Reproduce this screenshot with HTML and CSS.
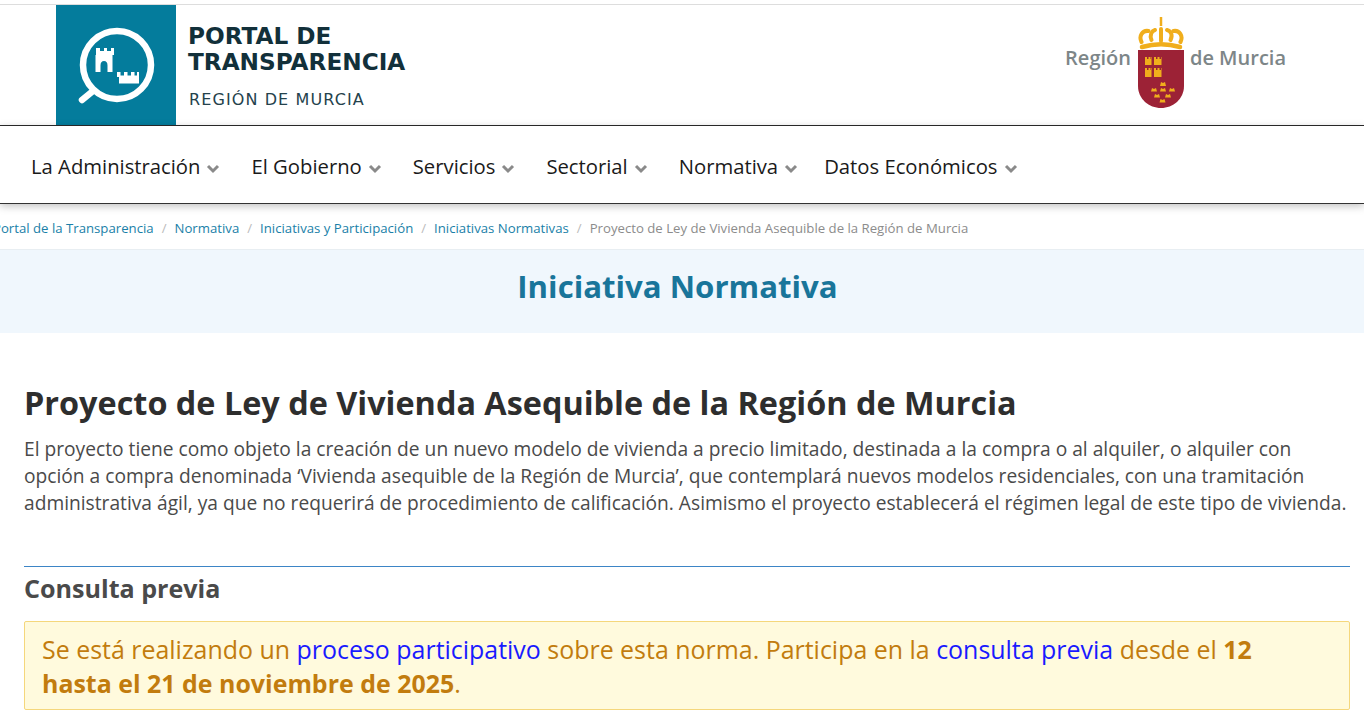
FILE: index.html
```html
<!DOCTYPE html>
<html lang="es">
<head>
<meta charset="utf-8">
<title>Iniciativa Normativa</title>
<link rel="stylesheet" href="styles.css">
</head>
<body>
<header class="top">
  <a class="brand">
    <span class="brand-mark">
      <svg width="120" height="120" viewBox="0 0 120 120">
        <circle cx="61" cy="60" r="34" fill="none" stroke="#fff" stroke-width="6.500"/>
        <path d="M37 86 L26 95" stroke="#fff" stroke-width="6.500" stroke-linecap="round"/>
        <path fill="#fff" fill-rule="evenodd" d="M40 43h4v3h4v-3h3v3h4v-3h3v7h-1.500v17h-5v-6.500a3.500 4.500 0 0 0-7 0V67h-5V50H40z"/>
        <path fill="#fff" d="M61 67h3.500v3.500H68V67h3.500v3.500H75V67h3.500v3.500H81V67h2v11.500H63V72h-2z"/>
      </svg>
    </span>
    <span class="brand-text">
      <span class="brand-title">PORTAL DE<br>TRANSPARENCIA</span>
      <span class="brand-sub">REGIÓN DE MURCIA</span>
    </span>
  </a>
  <div class="carm">
    <span class="carm-word">Región</span>
    <svg class="carm-shield" width="48" height="92" viewBox="0 0 48 92">
      <g fill="none" stroke="#f0ae1c" stroke-linecap="round" stroke-width="4">
        <path d="M4.500 26c-3-6 1-12 7-11"/>
        <path d="M14.500 24c-2-5 0-9 3.500-10"/>
        <path d="M24 25V13"/>
        <path d="M30 14c4 1 6 5 3.500 10"/>
        <path d="M36.500 15c6-1 10 5 7 11"/>
        <path d="M5 31c12-3.500 26-3.500 38 0" stroke-width="4.500"/>
      </g>
      <path d="M24 1v9" stroke="#f0ae1c" stroke-width="2.500"/>
      <path fill="#9c2236" d="M1 34h46v36c0 13-11 22-23 22S1 83 1 70z"/>
      <g fill="#f0ae1c">
        <path d="M8 41h2v2h1.500v-2h2v2H15v-2h-.5v8H8z"/>
        <path d="M17 41h2v2h1.500v-2h2v2H24v-2h.5v8H17z"/>
        <path d="M8 52h2v2h1.500v-2h2v2H15v-2h-.5v9H8z"/>
        <path d="M17 52h2v2h1.500v-2h2v2H24v-2h.5v9H17z"/>
        <path d="M24 66l2 1 2-1 1 4h-6z"/>
        <path d="M15 72l2 1 2-1 1 3.500h-6z"/>
        <path d="M24 72l2 1 2-1 1 3.500h-6z"/>
        <path d="M33 72l2 1 2-1 1 3.500h-6z"/>
        <path d="M18 78l2 1 2-1 1 3.500h-6z"/>
        <path d="M29 78l2 1 2-1 1 3.500h-6z"/>
        <path d="M23.500 83l2 1 2-1 1 3.500h-6z"/>
      </g>
    </svg>
    <span class="carm-word">de Murcia</span>
  </div>
</header>

<nav class="menu">
  <a class="menu-item">La Administración <svg class="chev" width="14" height="10" viewBox="0 0 14 10"><path d="M2 2l5 5 5-5" fill="none" stroke="#8a8a8a" stroke-width="3"/></svg></a>
  <a class="menu-item">El Gobierno <svg class="chev" width="14" height="10" viewBox="0 0 14 10"><path d="M2 2l5 5 5-5" fill="none" stroke="#8a8a8a" stroke-width="3"/></svg></a>
  <a class="menu-item">Servicios <svg class="chev" width="14" height="10" viewBox="0 0 14 10"><path d="M2 2l5 5 5-5" fill="none" stroke="#8a8a8a" stroke-width="3"/></svg></a>
  <a class="menu-item">Sectorial <svg class="chev" width="14" height="10" viewBox="0 0 14 10"><path d="M2 2l5 5 5-5" fill="none" stroke="#8a8a8a" stroke-width="3"/></svg></a>
  <a class="menu-item">Normativa <svg class="chev" width="14" height="10" viewBox="0 0 14 10"><path d="M2 2l5 5 5-5" fill="none" stroke="#8a8a8a" stroke-width="3"/></svg></a>
  <a class="menu-item menu-item-last">Datos Económicos <svg class="chev" width="14" height="10" viewBox="0 0 14 10"><path d="M2 2l5 5 5-5" fill="none" stroke="#8a8a8a" stroke-width="3"/></svg></a>
</nav>

<ol class="crumbs">
  <li><a>Portal de la Transparencia</a></li>
  <li><a>Normativa</a></li>
  <li><a>Iniciativas y Participación</a></li>
  <li><a>Iniciativas Normativas</a></li>
  <li class="current">Proyecto de Ley de Vivienda Asequible de la Región de Murcia</li>
</ol>

<div class="band"><h2 class="band-title">Iniciativa Normativa</h2></div>

<main class="content">
  <h1 class="law-title">Proyecto de Ley de Vivienda Asequible de la Región de Murcia</h1>
  <p class="law-text">El proyecto tiene como objeto la creación de un nuevo modelo de vivienda a precio limitado, destinada a la compra o al alquiler, o alquiler con opción a compra denominada ‘Vivienda asequible de la Región de Murcia’, que contemplará nuevos modelos residenciales, con una tramitación administrativa ágil, ya que no requerirá de procedimiento de calificación. Asimismo el proyecto establecerá el régimen legal de este tipo de vivienda.</p>
  <section class="phase">
    <h3 class="phase-title">Consulta previa</h3>
    <div class="notice">Se está realizando un <a class="notice-link">proceso participativo</a> sobre esta norma. Participa en la <a class="notice-link">consulta previa</a> desde el <strong>12 hasta el 21 de noviembre de 2025</strong>.</div>
  </section>
</main>
</body>
</html>
```
FILE: styles.css
```css
* { box-sizing: border-box; }
html, body { margin: 0; padding: 0; }
body {
  font-family: "Open Sans", "Liberation Sans", sans-serif;
  color: #444;
  background: #fff;
  overflow: hidden;
  height: 722px;
}
.top {
  height: 122px;
  margin-top: 4px;
  border-top: 1px solid #ddd;
  border-bottom: 1px solid #2b2b2b;
  padding-left: 56px;
  padding-right: 78px;
  display: flex;
  justify-content: space-between;
  align-items: flex-start;
}
.brand { display: flex; height: 120px; }
.brand-mark { width: 120px; height: 120px; background: #047c9c; display: block; }
.brand-mark svg { display: block; }
.brand-text { display: flex; flex-direction: column; padding: 18px 0 0 12px; color: #12303a; }
.brand-title { font-family: "DejaVu Sans", sans-serif; font-weight: 700; font-size: 23.200px; line-height: 26px; }
.brand-sub { font-family: "DejaVu Sans", sans-serif; font-size: 16px; line-height: 20px; letter-spacing: 1.100px; margin: 15px 0 0 1px; color: #24424c; }
.carm { display: flex; align-items: flex-start; gap: 5px; padding-top: 11px; }
.carm-word { font-weight: 600; font-size: 20px; line-height: 28px; color: #7d8688; margin-top: 28px; }
.carm-shield { display: block; margin-left: 1px; }
.menu {
  height: 78px;
  border-bottom: 1px solid #333;
  box-shadow: 0 2px 8px rgba(0,0,0,.25);
  display: flex;
  align-items: center;
  gap: 31px;
  padding: 3px 0 0 31px;
  background: #fff;
  position: relative;
}
.menu-item { font-size: 20.250px; color: #1a1a1a; white-space: nowrap; display: flex; align-items: center; gap: 6px; }
.menu-item-last { margin-left: -5px; }
.chev { margin-top: 6px; display: block; }
.crumbs {
  list-style: none;
  margin: 0 0 0 -7px;
  padding: 3px 0 0;
  height: 45px;
  display: flex;
  align-items: center;
  font-size: 13.200px;
  white-space: nowrap;
}
.crumbs li + li::before { content: "/"; color: #bbb; padding: 0 8px; }
.crumbs a { color: #1a7fa8; }
.crumbs .current { color: #8c8c8c; }
.band { height: 84px; background: #f0f7fd; border-top: 1px solid #e8eef2; display: flex; align-items: center; justify-content: center; padding: 0 9px 12px 0; }
.band-title { margin: 0; font-size: 31.200px; font-weight: 700; color: #19759a; }
.content { padding: 0 14px 0 24px; }
.law-title { margin: 48px 0 0; font-size: 32.400px; line-height: 42px; font-weight: 700; color: #2e2e2e; }
.law-text { margin: 12px 0 0; font-size: 19.200px; line-height: 27px; color: #4a4a4a; }
.phase { margin-top: 50px; border-top: 1px solid #3d85c6; }
.phase-title { margin: 4px 0 0; font-size: 25.100px; line-height: 34px; font-weight: 700; color: #4a4a4a; }
.notice {
  margin-top: 16px;
  padding: 10px 24px 9px 17px;
  background: #fffadd;
  border: 1px solid #f5d77c;
  border-radius: 2px;
  color: #c27c0e;
  font-size: 24.940px;
  line-height: 34px;
}
.notice-link { color: #1a1aff; }
```
